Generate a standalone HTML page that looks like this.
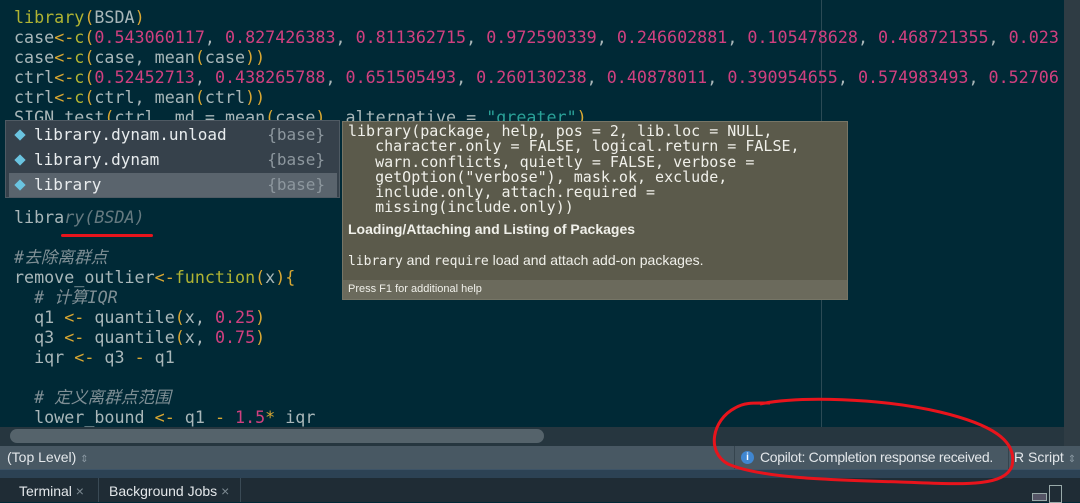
<!DOCTYPE html>
<html><head><meta charset="utf-8"><style>
body{margin:0;width:1080px;height:502px;overflow:hidden;background:#002936;position:relative;font-family:"DejaVu Sans Mono","Noto Sans CJK SC",monospace;}
.code{position:absolute;left:14px;top:7px;font-size:16.7px;line-height:20px;color:#a9b7b9;}
.l{height:20px;white-space:pre}
.f{color:#b0b433}.p{color:#d9a833}.n{color:#d0407f}.s{color:#2aa198}.c{color:#7f8f95;font-style:italic}.o{color:#d9a833}
.gut{position:absolute;left:1064px;top:0;width:16px;height:446px;background:#2f3c44}
.vline{position:absolute;left:821px;top:0;width:1px;height:428px;background:#2b4a55}
.hs{position:absolute;left:0;top:427px;width:1064px;height:19px;background:#26363f}
.hs div{position:absolute;left:10px;top:2px;width:534px;height:14px;border-radius:7px;background:#55636b}
.status{position:absolute;left:0;top:446px;width:1080px;height:23px;background:#485863;color:#e3e7ea;font-family:"Liberation Sans",sans-serif;font-size:14px;line-height:23px}
.band{position:absolute;left:0;top:469px;width:1080px;height:8px;background:#2c4254;border-top:1px solid #3e5467}
.tabs{position:absolute;left:0;top:478px;width:1080px;height:24px;background:#1f2c35;font-family:"Liberation Sans",sans-serif;font-size:14px;color:#e3e7ea}
.pop{position:absolute;left:5px;top:120px;width:335px;height:78px;background:#36414b;border:1px solid #4f5a63;box-sizing:border-box;font-size:16px;color:#e8ecee}
.row{position:absolute;left:3px;width:328px;height:24px;line-height:24px;white-space:pre}
.row .d{display:inline-block;width:8px;height:8px;background:#6ac4e0;transform:rotate(45deg);margin:0 10px 0 7px;position:relative;top:-1px}
.row .b{position:absolute;right:12px;color:#8d979e}
.tip{position:absolute;left:342px;top:121px;width:506px;height:179px;background:#5b5a4b;border:1px solid #767566;box-sizing:border-box;color:#f0f0ea}
.tip pre{margin:0;position:absolute;left:5px;top:2px;font-family:"DejaVu Sans Mono",monospace;font-size:15px;line-height:15.3px}
</style></head><body>
<div class="vline"></div>
<div class="code">
<div class="l"><span class="f">library</span><span class="p">(</span>BSDA<span class="p">)</span></div>
<div class="l">case<span class="o">&lt;-</span><span class="f">c</span><span class="p">(</span><span class="n">0.543060117</span>, <span class="n">0.827426383</span>, <span class="n">0.811362715</span>, <span class="n">0.972590339</span>, <span class="n">0.246602881</span>, <span class="n">0.105478628</span>, <span class="n">0.468721355</span>, <span class="n">0.023</span></div>
<div class="l">case<span class="o">&lt;-</span><span class="f">c</span><span class="p">(</span>case, mean<span class="p">(</span>case<span class="p">))</span></div>
<div class="l">ctrl<span class="o">&lt;-</span><span class="f">c</span><span class="p">(</span><span class="n">0.52452713</span>, <span class="n">0.438265788</span>, <span class="n">0.651505493</span>, <span class="n">0.260130238</span>, <span class="n">0.40878011</span>, <span class="n">0.390954655</span>, <span class="n">0.574983493</span>, <span class="n">0.52706</span></div>
<div class="l">ctrl<span class="o">&lt;-</span><span class="f">c</span><span class="p">(</span>ctrl, mean<span class="p">(</span>ctrl<span class="p">))</span></div>
<div class="l">SIGN.test<span class="p">(</span>ctrl, md = mean<span class="p">(</span>case<span class="p">)</span>, alternative = <span class="s">"greater"</span><span class="p">)</span></div>
<div class="l"></div><div class="l"></div><div class="l"></div><div class="l"></div>
<div class="l">libra<span style="color:#667a80;font-style:italic">ry(BSDA)</span></div>
<div class="l"></div>
<div class="l"><span class="c">#去除离群点</span></div>
<div class="l">remove_outlier<span class="o">&lt;-</span><span class="f">function</span><span class="p">(</span>x<span class="p">){</span></div>
<div class="l">  <span class="c"># 计算IQR</span></div>
<div class="l">  q1 <span class="o">&lt;-</span> quantile<span class="p">(</span>x, <span class="n">0.25</span><span class="p">)</span></div>
<div class="l">  q3 <span class="o">&lt;-</span> quantile<span class="p">(</span>x, <span class="n">0.75</span><span class="p">)</span></div>
<div class="l">  iqr <span class="o">&lt;-</span> q3 <span class="o">-</span> q1</div>
<div class="l"></div>
<div class="l">  <span class="c"># 定义离群点范围</span></div>
<div class="l">  lower_bound <span class="o">&lt;-</span> q1 <span class="o">-</span> <span class="n">1.5</span><span class="o">*</span> iqr</div>
</div>
<div style="position:absolute;left:61px;top:234px;width:92px;height:3px;background:#e8141c;border-radius:2px"></div>
<div class="gut"></div>
<div class="hs"><div></div></div>
<div class="pop">
<div class="row" style="top:2px"><span class="d"></span>library.dynam.unload<span class="b">{base}</span></div>
<div class="row" style="top:27px"><span class="d"></span>library.dynam<span class="b">{base}</span></div>
<div class="row" style="top:52px;background:#5a646d"><span class="d"></span>library<span class="b">{base}</span></div>
</div>
<div class="tip">
<pre>library(package, help, pos = 2, lib.loc = NULL,
   character.only = FALSE, logical.return = FALSE,
   warn.conflicts, quietly = FALSE, verbose =
   getOption("verbose"), mask.ok, exclude,
   include.only, attach.required =
   missing(include.only))</pre>
<div style="position:absolute;left:5px;top:99px;font-family:'Liberation Sans',sans-serif;font-weight:bold;font-size:14px">Loading/Attaching and Listing of Packages</div>
<div style="position:absolute;left:5px;top:130px;font-family:'Liberation Sans',sans-serif;font-size:14px"><span style="font-family:'DejaVu Sans Mono',monospace;font-size:13px">library</span> and <span style="font-family:'DejaVu Sans Mono',monospace;font-size:13px">require</span> load and attach add-on packages.</div>
<div style="position:absolute;left:0;top:158px;width:504px;height:19px;background:#6b6a5c;font-family:'Liberation Sans',sans-serif;font-size:11px;line-height:19px;padding-left:5px;box-sizing:border-box">Press F1 for additional help</div>
</div>
<div class="status">
<span style="position:absolute;left:7px">(Top Level) <span style="color:#8a98a2;font-size:10px">⇕</span></span>
<div style="position:absolute;left:734px;top:0;width:1px;height:23px;background:#35444e"></div>
<span style="position:absolute;left:741px;top:5px;width:13px;height:13px;border-radius:50%;background:#3f86d0;color:#fff;font-size:10px;line-height:13px;text-align:center;font-weight:bold">i</span>
<span style="position:absolute;left:760px;letter-spacing:-0.3px">Copilot: Completion response received.</span>
<div style="position:absolute;left:1008px;top:0;width:1px;height:23px;background:#35444e"></div>
<span style="position:absolute;left:1014px">R Script <span style="color:#8a98a2;font-size:10px">⇕</span></span>
</div>
<div class="band"></div>
<div class="tabs">
<span style="position:absolute;left:19px;top:5px">Terminal <span style="color:#7d8a92">×</span></span>
<div style="position:absolute;left:98px;top:0;width:1px;height:24px;background:#3a4a55"></div>
<span style="position:absolute;left:109px;top:5px">Background Jobs <span style="color:#7d8a92">×</span></span>
<div style="position:absolute;left:240px;top:0;width:1px;height:24px;background:#3a4a55"></div>
<div style="position:absolute;left:1032px;top:15px;width:13px;height:6px;border:1px solid #9aa;background:#556"></div>
<div style="position:absolute;left:1049px;top:7px;width:11px;height:16px;border:1px solid #9aa"></div>
</div>
<svg style="position:absolute;left:0;top:0" width="1080" height="502"><path d="M760 404 C 800 396, 880 398, 940 412 C 990 424, 1018 440, 1012 466 C 1004 488, 960 484, 900 482 C 830 480, 760 478, 728 464 C 706 452, 712 420, 735 408 C 745 402, 755 403, 770 403" fill="none" stroke="#e8141c" stroke-width="3"/></svg>
</body></html>
